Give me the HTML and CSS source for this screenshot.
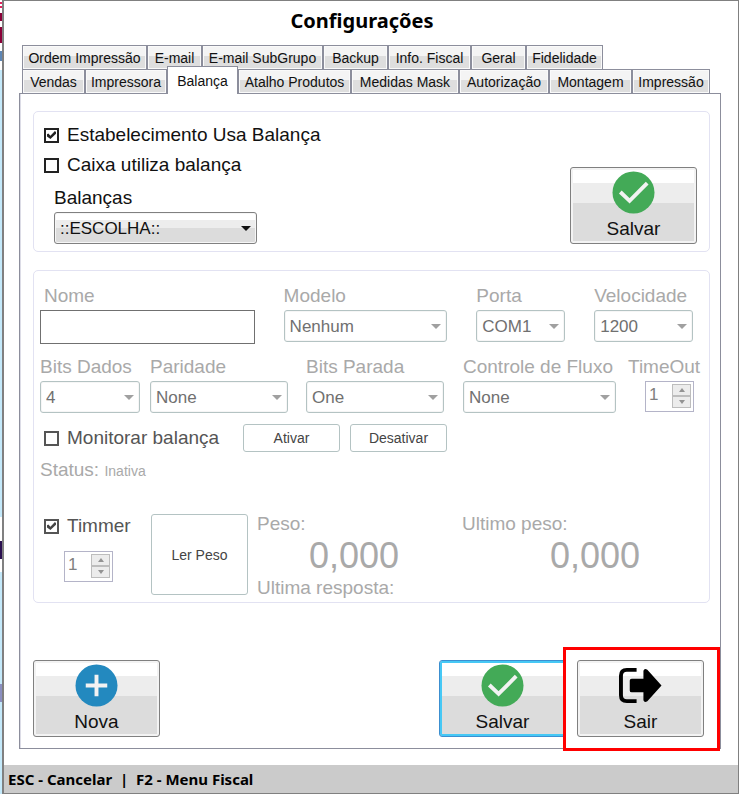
FILE: index.html
```html
<!DOCTYPE html>
<html lang="pt-BR">
<head>
    <meta charset="UTF-8">
    <meta name="viewport" content="width=device-width, initial-scale=1.0">
    <title>Configurações</title>
    <link rel="stylesheet" href="styles.css">
</head>
<body>
    <div class="desktop-edge"></div>
    <main class="window">
        <h1 class="window-title">Configurações</h1>

        <div class="tabs" role="tablist">
            <div class="tab-row tab-row-top">
                <button class="tab" role="tab">Ordem Impressão</button>
                <button class="tab" role="tab">E-mail</button>
                <button class="tab" role="tab">E-mail SubGrupo</button>
                <button class="tab" role="tab">Backup</button>
                <button class="tab" role="tab">Info. Fiscal</button>
                <button class="tab" role="tab">Geral</button>
                <button class="tab" role="tab">Fidelidade</button>
            </div>
            <div class="tab-row tab-row-bottom">
                <button class="tab" role="tab">Vendas</button>
                <button class="tab" role="tab">Impressora</button>
                <button class="tab active" role="tab" aria-selected="true">Balança</button>
                <button class="tab" role="tab">Atalho Produtos</button>
                <button class="tab" role="tab">Medidas Mask</button>
                <button class="tab" role="tab">Autorização</button>
                <button class="tab" role="tab">Montagem</button>
                <button class="tab" role="tab">Impressão</button>
            </div>
        </div>

        <div class="panel" role="tabpanel">
            <!-- Uso da balança -->
            <section class="group usage">
                <div class="usage-options">
                    <label class="check"><input type="checkbox" checked>Estabelecimento Usa Balança</label>
                    <label class="check"><input type="checkbox">Caixa utiliza balança</label>
                    <div class="field scale-field">
                        <label for="balancas">Balanças</label>
                        <div class="select">
                            <select id="balancas"><option>::ESCOLHA::</option></select>
                        </div>
                    </div>
                </div>
                <button class="big-button">
                    <svg viewBox="0 0 44 44" aria-hidden="true">
                        <circle cx="22" cy="22" r="21.5" fill="#43aa57"/>
                        <path d="M8.5 21.5 L18 30.5 L36 12.5" fill="none" stroke="#f2f2f2" stroke-width="4"/>
                    </svg>
                    <span>Salvar</span>
                </button>
            </section>

            <!-- Dados da balança -->
            <section class="group details">
                <div class="fields fields-first">
                    <div class="field">
                        <label class="inset" for="nome">Nome</label>
                        <input class="text-box" type="text" id="nome" disabled>
                    </div>
                    <div class="field">
                        <label for="modelo">Modelo</label>
                        <div class="select"><select id="modelo" disabled><option>Nenhum</option></select></div>
                    </div>
                    <div class="field">
                        <label for="porta">Porta</label>
                        <div class="select"><select id="porta" disabled><option>COM1</option></select></div>
                    </div>
                    <div class="field">
                        <label for="velocidade">Velocidade</label>
                        <div class="select"><select id="velocidade" disabled><option>1200</option></select></div>
                    </div>
                </div>

                <div class="fields fields-second">
                    <div class="field data-bits">
                        <label for="bitsDados">Bits Dados</label>
                        <div class="select"><select id="bitsDados" disabled><option>4</option></select></div>
                    </div>
                    <div class="field">
                        <label for="paridade">Paridade</label>
                        <div class="select"><select id="paridade" disabled><option>None</option></select></div>
                    </div>
                    <div class="field">
                        <label for="bitsParada">Bits Parada</label>
                        <div class="select"><select id="bitsParada" disabled><option>One</option></select></div>
                    </div>
                    <div class="field flow-control">
                        <label for="fluxo">Controle de Fluxo</label>
                        <div class="select"><select id="fluxo" disabled><option>None</option></select></div>
                    </div>
                    <div class="field timeout">
                        <label for="timeout">TimeOut</label>
                        <div class="spinner">
                            <input type="number" id="timeout" value="1" disabled>
                            <div class="spinner-buttons">
                                <button class="up" aria-label="Aumentar" disabled></button>
                                <button class="down" aria-label="Diminuir" disabled></button>
                            </div>
                        </div>
                    </div>
                </div>

                <div class="monitor">
                    <label class="check"><input type="checkbox" disabled>Monitorar balança</label>
                    <button class="flat-button" disabled>Ativar</button>
                    <button class="flat-button" disabled>Desativar</button>
                </div>
                <p class="status">Status: <small>Inativa</small></p>

                <div class="reading">
                    <div class="timer">
                        <label class="check"><input type="checkbox" checked disabled>Timmer</label>
                        <div class="spinner">
                            <input type="number" value="1" aria-label="Intervalo" disabled>
                            <div class="spinner-buttons">
                                <button class="up" aria-label="Aumentar" disabled></button>
                                <button class="down" aria-label="Diminuir" disabled></button>
                            </div>
                        </div>
                    </div>
                    <button class="flat-button read-button" disabled>Ler Peso</button>
                    <div class="weight">
                        <span>Peso:</span>
                        <output>0,000</output>
                        <span>Ultima resposta:</span>
                    </div>
                    <div class="weight last-weight">
                        <span>Ultimo peso:</span>
                        <output>0,000</output>
                    </div>
                </div>
            </section>

            <div class="actions">
                <button class="big-button">
                    <svg viewBox="0 0 44 44" aria-hidden="true">
                        <circle cx="22" cy="22" r="21.5" fill="#2389bf"/>
                        <path d="M22 11 V33 M11 22 H33" fill="none" stroke="#f2f2f2" stroke-width="4"/>
                    </svg>
                    <span>Nova</span>
                </button>
                <button class="big-button focused">
                    <svg viewBox="0 0 44 44" aria-hidden="true">
                        <circle cx="22" cy="22" r="21.5" fill="#43aa57"/>
                        <path d="M8.5 21.5 L18 30.5 L36 12.5" fill="none" stroke="#f2f2f2" stroke-width="4"/>
                    </svg>
                    <span>Salvar</span>
                </button>
                <div class="highlight">
                    <button class="big-button">
                        <svg viewBox="0 0 44 44" aria-hidden="true">
                            <path d="M18 6 H8 Q2 6 2 12 V32 Q2 38 8 38 H18" fill="none" stroke="#000" stroke-width="4"/>
                            <path d="M13 15 H25 V7 Q26 4 29 6 L43.5 22 L29 38 Q26 40 25 37 V29 H13 Q11 29 11 27 V17 Q11 15 13 15 Z" fill="#000"/>
                        </svg>
                        <span>Sair</span>
                    </button>
                </div>
            </div>
        </div>

        <footer class="shortcuts">ESC - Cancelar&nbsp; |&nbsp; F2 - Menu Fiscal</footer>
    </main>
</body>
</html>
```

FILE: styles.css
```css
* {
    box-sizing: border-box;
}
body {
    display: flex;
    min-height: 100vh;
    margin: 0;
    background-color: #fff;
    color: #111;
    font-family: "Liberation Sans", Arial, sans-serif;
    font-size: 19px;
    line-height: 24px;
}
button,
input,
select {
    margin: 0;
    font-family: inherit;
    color: inherit;
}

/* Sliver of the application behind the window */
.desktop-edge {
    flex: 0 0 2px;
    background: linear-gradient(
        #fff 0 2px, #e0245e 2px 4px, #fff 4px 6px, #e0245e 6px 8px, #fff 8px 13px,
        #8a0038 13px 21px, #fff 21px 27px, #8a0038 27px 43px, #fff 43px 51px,
        #5d86b5 51px 61px, #fff 61px 70px, #c4e9fa 70px 517px, #fff 517px 541px,
        #2a1050 541px 559px, #fff 559px 572px, #c4e9fa 572px 684px,
        #8b8fc0 684px 702px, #c4e9fa 702px);
}
.window {
    flex: 1;
    display: flex;
    flex-direction: column;
    min-width: 0;
    border: 1px solid #808080;
    border-left-width: 2px;
}
.window-title {
    margin: 6px 0 11px;
    padding-right: 18px;
    font-family: "Noto Sans", sans-serif;
    font-size: 20px;
    line-height: 27px;
    text-align: center;
    color: #000;
}

/* Tabs */
.tabs {
    padding-left: 18px;
}
.tab-row {
    display: grid;
    height: 24px;
}
.tab-row-top {
    grid-template-columns: 125px 55px 121px 65px 83px 55px 77px;
}
.tab-row-bottom {
    grid-template-columns: 63px 82px 71px 113px 108px 90px 83px 78px;
}
.tab {
    padding: 0;
    border: 1px solid #8c8e9c;
    border-bottom: none;
    background: linear-gradient(#f4f4f4 0 45%, #dedede 45%);
    box-shadow: inset 0 0 0 1px #fafafa;
    font-size: 14px;
    line-height: 22px;
    white-space: nowrap;
}
.tab.active {
    position: relative;
    margin: -3px 0 -1px;
    background: #fff;
    box-shadow: none;
}
.panel {
    flex: 1;
    display: flex;
    flex-direction: column;
    gap: 18px;
    margin: 0 17px 16px 15px;
    padding: 17px 10px 11px 13px;
    border: 1px solid #8c8e9c;
    box-shadow: inset 1px 0 #dcdce6;
}
.group {
    border: 1px solid #e2e2f2;
    border-radius: 5px;
}

/* Check boxes */
.check {
    display: flex;
    align-items: center;
    gap: 8px;
}
.check input {
    appearance: none;
    display: grid;
    place-items: center;
    width: 15px;
    height: 15px;
    border: 2px solid #222;
    background-color: #fff;
}
.check input:checked::after {
    content: "";
    width: 9px;
    height: 8px;
    background-color: #222;
    clip-path: polygon(0 40%, 15% 32%, 38% 58%, 88% 0, 100% 12%, 100% 35%, 38% 100%, 0 68%);
}
.check input:disabled {
    border-color: #555;
}
.check input:disabled::after {
    background-color: #444;
}

/* Fields */
.field {
    display: flex;
    flex-direction: column;
    gap: 2px;
    min-width: 0;
}
.select {
    position: relative;
}
.select::after {
    content: "";
    position: absolute;
    top: 14px;
    right: 6px;
    border: 5px solid transparent;
    border-top-color: #111;
    border-bottom: none;
}
.select select {
    appearance: none;
    display: block;
    width: 100%;
    height: 32px;
    padding: 0 5px;
    border: 1px solid #808080;
    border-radius: 3px;
    background: linear-gradient(#fff 0 25%, #ededed 25% 50%, #dcdcdc 50%);
    box-shadow: inset 0 0 0 1px #f6f6f6;
    font-size: 17px;
}
.select select:disabled {
    border-color: #b4c3c3;
    background: #fff;
    color: #707070;
    opacity: 1;
}
.select:has(select:disabled)::after {
    border-top-color: #a0a0a0;
}
.text-box {
    width: 100%;
    height: 34px;
    padding: 0 5px;
    border: 1px solid #707070;
    background-color: #fff;
    font-size: 17px;
}
.spinner {
    display: flex;
    justify-content: space-between;
    width: 49px;
    height: 31px;
    padding: 2px;
    border: 1px solid #b4b4c8;
    background-color: #fff;
}
.spinner input {
    appearance: textfield;
    width: 22px;
    height: 21px;
    padding: 0 1px;
    border: none;
    background: none;
    font-size: 17px;
    color: #808080;
}
.spinner input::-webkit-inner-spin-button {
    display: none;
}
.spinner-buttons {
    display: grid;
    width: 19px;
    height: 24px;
}
.spinner-buttons button {
    display: grid;
    place-items: center;
    padding: 0;
    border: 1px solid #bdbdbd;
    background-color: #ececec;
}
.spinner-buttons button::after {
    content: "";
    border: 3px solid transparent;
}
.spinner-buttons .up::after {
    border-top: none;
    border-bottom: 4px solid #939393;
}
.spinner-buttons .down::after {
    border-bottom: none;
    border-top: 4px solid #939393;
}

/* Buttons */
.big-button {
    display: flex;
    flex-direction: column;
    align-items: center;
    width: 127px;
    height: 77px;
    padding: 3px 0 0;
    border: 1px solid #808080;
    border-radius: 3px;
    background: linear-gradient(#fff 0 15px, #ededed 15px 35px, #dcdcdc 35px);
    box-shadow: inset 0 0 0 2px #f3f3f3;
    font-size: 19px;
    line-height: 24px;
}
.big-button svg {
    flex: none;
    width: 43px;
    height: 43px;
}
.big-button span {
    margin-top: 3px;
}
.big-button.focused {
    border-color: #3c8fd0;
    box-shadow: inset 0 0 0 2px #46c8f5;
}
.flat-button {
    width: 97px;
    height: 28px;
    padding: 0;
    border: 1px solid #b4c3c3;
    border-radius: 3px;
    background-color: #fff;
    color: #444;
    font-size: 14px;
}

/* Uso da balança */
.usage {
    display: flex;
    justify-content: space-between;
    align-items: flex-end;
    padding: 11px 12px 7px 10px;
}
.usage-options {
    display: flex;
    flex-direction: column;
    gap: 6px;
}
.scale-field {
    width: 203px;
    margin: 3px 0 0 10px;
}

/* Dados da balança */
.details {
    display: flex;
    flex-direction: column;
    padding: 13px 9px 4px 6px;
    color: #a9a9a9;
}
.details .check {
    color: #555;
}
.inset {
    padding-left: 4px;
}
.fields {
    display: grid;
}
.fields-first {
    grid-template-columns: 215fr 164fr 89fr 99fr;
    column-gap: 29px;
    padding-right: 7px;
}
.fields-second {
    grid-template-columns: 110px 156px 157px 165px 66px;
    margin-top: 11px;
}
.fields-second .select {
    width: 138px;
}
.data-bits .select {
    width: 100px;
}
.flow-control .select {
    width: 153px;
}
.timeout .spinner {
    align-self: flex-end;
}
.monitor {
    display: flex;
    align-items: center;
    gap: 10px;
    margin-top: 11px;
}
.monitor .check {
    width: 193px;
    padding-left: 4px;
}
.status {
    margin: 6px 0 0;
}
.status small {
    font-size: 14px;
}
.reading {
    display: grid;
    grid-template-columns: 102px 97px 196px 1fr;
    column-gap: 9px;
    margin-top: 31px;
}
.timer {
    padding-left: 4px;
}
.timer .spinner {
    margin: 13px 0 0 20px;
}
.read-button {
    height: 81px;
}
.weight {
    display: flex;
    flex-direction: column;
    line-height: 20px;
}
.weight output {
    padding-left: 52px;
    font-size: 36px;
    line-height: 44px;
}
.last-weight output {
    padding-left: 88px;
}

/* Botões inferiores */
.actions {
    display: flex;
    gap: 11px;
    margin-top: auto;
    padding-right: 6px;
}
.actions .focused {
    margin-left: auto;
}
.highlight {
    position: relative;
}
.highlight::after {
    content: "";
    position: absolute;
    inset: -13px -16px -14px -14px;
    border: 3px solid #f00;
    pointer-events: none;
}

.shortcuts {
    padding: 2px 4px;
    background-color: #cbcbcb;
    font-family: "Noto Sans", sans-serif;
    font-size: 15px;
    font-weight: bold;
    color: #000;
}
```
